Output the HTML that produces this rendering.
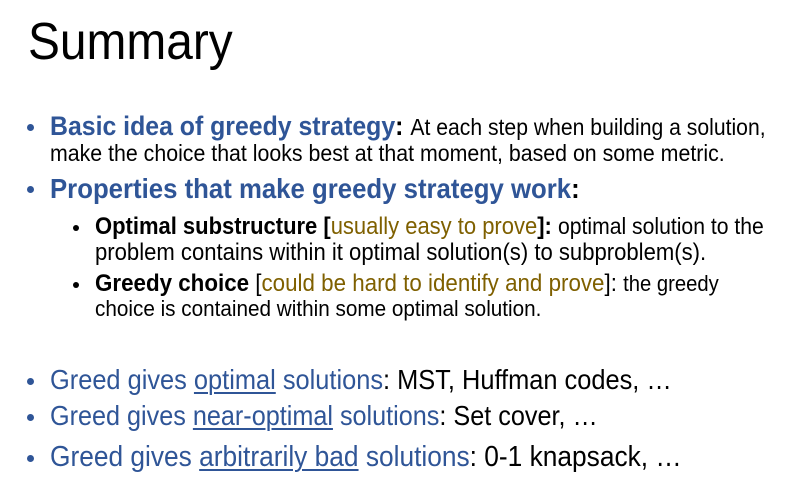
<!DOCTYPE html>
<html><head><meta charset="utf-8"><style>
body{margin:0;width:786px;height:489px;background:#fff;overflow:hidden;position:relative;font-family:"Liberation Sans",sans-serif;color:#000}
.l{position:absolute;white-space:nowrap;transform-origin:left center;transform:scaleX(0.92);line-height:1}
.b{color:#2F5597}
.g{color:#7F6000}
.bul{position:absolute;width:7px;height:7px;border-radius:50%}
u{text-decoration-thickness:2px;text-underline-offset:3px}
</style></head><body>
<div class="l" style="left:28px;top:16px;font-size:52px;">Summary</div>

<div class="bul" style="left:27px;top:124px;background:#2F5597"></div>
<div class="l" style="left:50px;top:113px;font-size:27px;"><b class="b">Basic idea of greedy strategy</b><b>:</b> <span style="font-size:23px">At each step when building a solution,</span></div>
<div class="l" style="left:50px;top:142px;font-size:23.2px;">make the choice that looks best at that moment, based on some metric.</div>

<div class="bul" style="left:27px;top:186px;background:#2F5597"></div>
<div class="l" style="left:50px;top:175px;font-size:28px;"><b class="b">Properties that make greedy strategy work</b><b>:</b></div>

<div class="bul" style="left:73px;top:225px;width:6px;height:6px;background:#000"></div>
<div class="l" style="left:95px;top:215px;font-size:23.9px;"><b>Optimal substructure [</b><span class="g">usually easy to prove</span><b>]:</b> <span style="font-size:23px">optimal solution to the</span></div>
<div class="l" style="left:95px;top:241px;font-size:24px;">problem contains within it optimal solution(s) to subproblem(s).</div>

<div class="bul" style="left:73px;top:282px;width:6px;height:6px;background:#000"></div>
<div class="l" style="left:95px;top:272px;font-size:24.3px;"><b>Greedy choice</b> [<span class="g">could be hard to identify and prove</span>]: <span style="font-size:22px">the greedy</span></div>
<div class="l" style="left:95px;top:298px;font-size:22.5px;">choice is contained within some optimal solution.</div>

<div class="bul" style="left:27px;top:378px;background:#2F5597"></div>
<div class="l b" style="left:50px;top:366px;font-size:27.6px;">Greed gives <u>optimal</u> solutions<span style="color:#000">: MST, Huffman codes, …</span></div>
<div class="bul" style="left:27px;top:414px;background:#2F5597"></div>
<div class="l b" style="left:50px;top:402px;font-size:27.4px;">Greed gives <u>near-optimal</u> solutions<span style="color:#000">: Set cover, …</span></div>
<div class="bul" style="left:27px;top:455px;background:#2F5597"></div>
<div class="l b" style="left:50px;top:443px;font-size:28.6px;">Greed gives <u>arbitrarily bad</u> solutions<span style="color:#000">: 0-1 knapsack, …</span></div>
</body></html>
